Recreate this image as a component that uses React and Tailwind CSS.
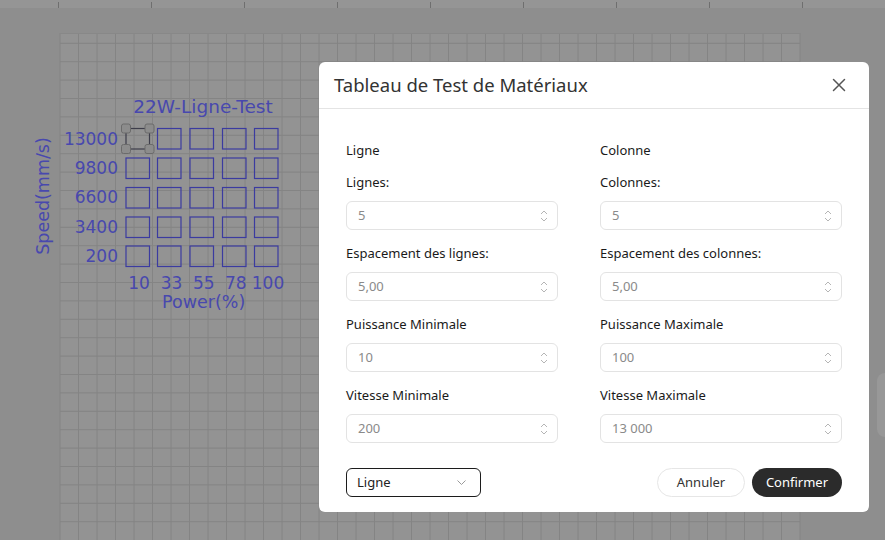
import React from "react";

const ink = "#4848ae";
const speeds = ["13000", "9800", "6600", "3400", "200"];
const powers = ["10", "33", "55", "78", "100"];
const colX = [126, 157.5, 190, 222.5, 254.5];
const rowY = [128.5, 158, 187.5, 217, 246];
const powerX = [139, 171.5, 203.7, 235.8, 268];

const leftFields = [
  { label: "Lignes:", value: "5" },
  { label: "Espacement des lignes:", value: "5,00" },
  { label: "Puissance Minimale", value: "10" },
  { label: "Vitesse Minimale", value: "200" },
];

const rightFields = [
  { label: "Colonnes:", value: "5" },
  { label: "Espacement des colonnes:", value: "5,00" },
  { label: "Puissance Maximale", value: "100" },
  { label: "Vitesse Maximale", value: "13 000" },
];

const Stepper = () => (
  <svg width="8" height="14" viewBox="0 0 8 14" fill="none" stroke="#b5b5b5" strokeWidth="1">
    <path d="M1 5 L4 2 L7 5" />
    <path d="M1 9 L4 12 L7 9" />
  </svg>
);

const Ruler = () => (
  <div className="h-2 bg-[#959595]">
    <svg width="885" height="8">
      {[58, 151, 244, 337, 430, 523, 616, 709, 802].map((x) => (
        <line key={x} x1={x + 0.5} x2={x + 0.5} y1="2" y2="8" stroke="#6f6f6f" strokeWidth="1" />
      ))}
    </svg>
  </div>
);

const Canvas = () => {
  const vLines = [];
  for (let x = 60; x <= 800.5; x += 18.5) vLines.push(x);
  const hLines = [];
  for (let y = 43.3; y <= 540; y += 18.4) hLines.push(y);

  return (
    <div className="h-[532px]">
      <svg width="885" height="532" viewBox="0 8 885 532">
        <rect x="60" y="33" width="740" height="507" fill="#939393" />
        {vLines.map((x) => (
          <line key={"v" + x} x1={x} x2={x} y1="33" y2="540" stroke="#848484" strokeWidth="1" />
        ))}
        <line x1="60" x2="800" y1="33.5" y2="33.5" stroke="#888888" strokeWidth="1" />
        {hLines.map((y) => (
          <line key={"h" + y} x1="60" x2="800" y1={y} y2={y} stroke="#848484" strokeWidth="1" />
        ))}

        <g fontFamily="'DejaVu Sans', sans-serif" fill={ink}>
          <text x="203" y="113" fontSize="18.5" textAnchor="middle">22W-Ligne-Test</text>
          {speeds.map((s, i) => (
            <text key={s} x="118" y={145 + i * 29.2} fontSize="17" textAnchor="end">{s}</text>
          ))}
          {powers.map((p, i) => (
            <text key={p} x={powerX[i]} y="289" fontSize="17" textAnchor="middle">{p}</text>
          ))}
          <text x="203.7" y="308" fontSize="17.5" textAnchor="middle">Power(%)</text>
          <text transform="translate(48.5 196) rotate(-90)" fontSize="17.5" textAnchor="middle">Speed(mm/s)</text>
        </g>

        <g fill="none" strokeWidth="1.2">
          {rowY.map((y, r) =>
            colX.map((x, c) => (
              <rect
                key={r + "-" + c}
                x={x}
                y={y}
                width="23.5"
                height="20.5"
                stroke={r === 0 && c === 0 ? "#3d3d4a" : "#3b3ba0"}
              />
            ))
          )}
        </g>
        {[
          [126, 128.5],
          [149.5, 128.5],
          [126, 149],
          [149.5, 149],
        ].map(([x, y]) => (
          <rect key={x + "," + y} x={x - 4.5} y={y - 4.5} width="9" height="9" rx="2" fill="#8c8c8c" stroke="#6b6b6b" strokeWidth="1" />
        ))}
      </svg>
    </div>
  );
};

const Field = ({ label, value, width }) => (
  <div className="flex flex-col">
    <div className="h-5 leading-5 mb-[9px] text-[#1a1a1a]">{label}</div>
    <div className={`${width} h-[29px] rounded-md border border-[#e3e3e3] flex items-center justify-between pl-[11px] pr-[9px] text-[#8a8a8a]`}>
      <span>{value}</span>
      <Stepper />
    </div>
  </div>
);

const Column = ({ title, fields, width }) => (
  <div className="flex flex-col">
    <div className="h-5 leading-5 mb-3 text-[#1a1a1a]">{title}</div>
    <div className="flex flex-col gap-[13px]">
      {fields.map((f) => (
        <Field key={f.label} label={f.label} value={f.value} width={width} />
      ))}
    </div>
  </div>
);

const Dialog = () => (
  <div className="absolute left-[319px] top-[62px] w-[550px] h-[450px] bg-white rounded-md flex flex-col font-['Noto_Sans',sans-serif] text-[13px]">
    <div className="h-[47px] border-b border-[#e4e4e4] flex items-center justify-between pl-[15px] pr-[23px]">
      <span className="text-[18.5px] text-[#333]">Tableau de Test de Matériaux</span>
      <svg width="14" height="14" viewBox="0 0 14 14" stroke="#555" strokeWidth="1.5" strokeLinecap="round">
        <path d="M1.5 1.5 L12.5 12.5 M12.5 1.5 L1.5 12.5" />
      </svg>
    </div>
    <div className="px-[27px] pt-[31px] grid grid-cols-2 gap-x-3">
      <Column title="Ligne" fields={leftFields} width="w-[212px]" />
      <Column title="Colonne" fields={rightFields} width="w-full" />
    </div>
    <div className="mt-auto px-[27px] pb-[15px] flex items-center justify-between">
      <div className="w-[135px] h-[29px] rounded-md border border-[#1c1c1c] flex items-center justify-between pl-[10px] pr-[14px] text-[#222]">
        <span>Ligne</span>
        <svg width="9" height="5" viewBox="0 0 9 5" fill="none" stroke="#9a9a9a" strokeWidth="1">
          <path d="M0.5 0.5 L4.5 4.5 L8.5 0.5" />
        </svg>
      </div>
      <div className="flex items-center gap-[7px]">
        <button className="w-[88px] h-[29px] rounded-full border border-[#e6e6e6] text-[#333]">Annuler</button>
        <button className="w-[90px] h-[29px] rounded-full bg-[#2b2b2b] text-white">Confirmer</button>
      </div>
    </div>
  </div>
);

export default function App() {
  return (
    <div className="relative w-[885px] h-[540px] overflow-hidden bg-[#8e8e8e]">
      <Ruler />
      <Canvas />
      <Dialog />
      <div className="absolute left-[877px] top-[373px] w-5 h-16 rounded-lg bg-[#989898]" />
    </div>
  );
}
